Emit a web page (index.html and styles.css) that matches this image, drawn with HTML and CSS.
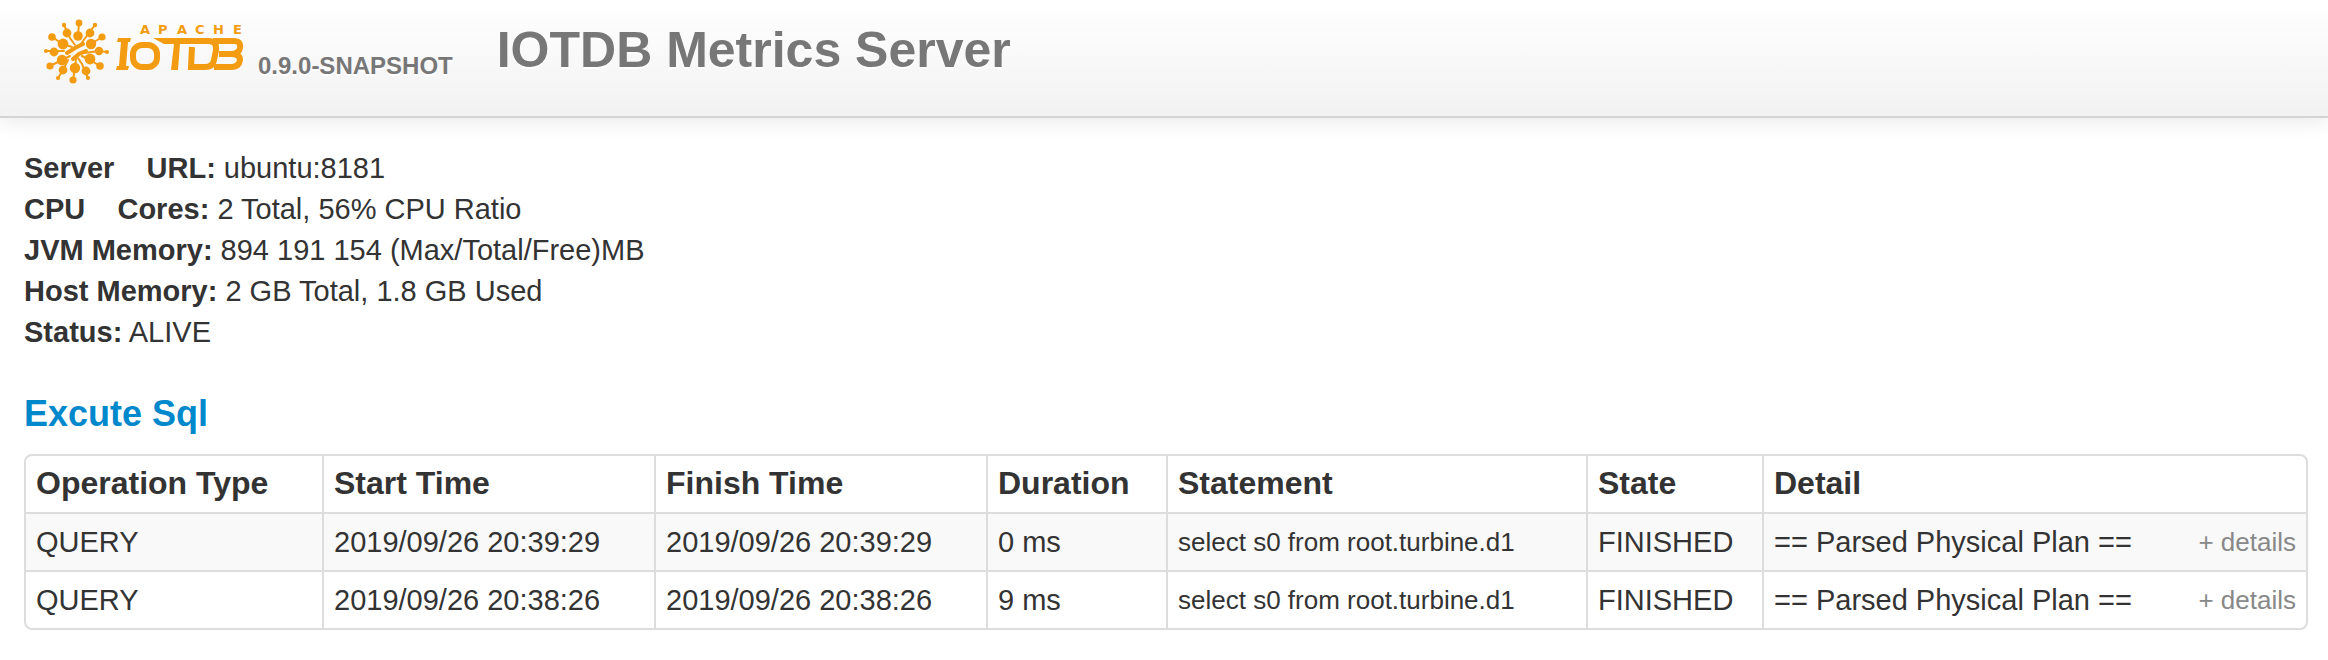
FILE: index.html
```html
<!DOCTYPE html>
<html lang="en">
<head>
<meta charset="utf-8">
<title>IOTDB Metrics Server</title>
<link rel="stylesheet" href="styles.css">
</head>
<body>
<header class="navbar">
  <a class="brand" href="#" aria-label="Apache IoTDB">
    <svg class="logo" width="206" height="70" viewBox="40 14 206 70">
      <g fill="none" stroke="#f39c12" stroke-linecap="round">
        <path stroke-width="2" d="M79 23L78 36M64 25L70 38L75 45M95 25L86 37L80 45M52 37L63 44L72 47M102 37L91 44M46 51H54L64 51M107 52L99 51L84 53M50 66L62 60L70 56M100 66L90 60L82 56M58 78L63 70L68 60M88 78L82 64L78 58M73 80L75 68L76 59"/>
        <path stroke-width="4" d="M67 53L75 48L83 44M73 59L79 54L86 51"/>
      </g>
      <g fill="#f39c12">
        <circle cx="79" cy="23" r="3.4"/><circle cx="64" cy="25" r="2.2"/><circle cx="95" cy="25" r="2.2"/>
        <circle cx="67" cy="33" r="4.4"/><circle cx="90" cy="33" r="4.4"/><circle cx="78" cy="36" r="4.8"/>
        <circle cx="52" cy="37" r="3.8"/><circle cx="102" cy="37" r="3.6"/><circle cx="63" cy="44" r="5.4"/><circle cx="91" cy="44" r="5.2"/>
        <circle cx="46" cy="51" r="2"/><circle cx="54" cy="52" r="4.4"/><circle cx="99" cy="51" r="4.2"/><circle cx="107" cy="52" r="2"/>
        <circle cx="62" cy="60" r="5.2"/><circle cx="90" cy="59" r="5.4"/><circle cx="50" cy="66" r="3.6"/><circle cx="100" cy="66" r="3.8"/>
        <circle cx="63" cy="70" r="4.4"/><circle cx="75" cy="68" r="5.2"/><circle cx="86" cy="71" r="4.4"/>
        <circle cx="58" cy="78" r="2.1"/><circle cx="88" cy="78" r="2.1"/><circle cx="73" cy="80" r="3.6"/>
      </g>
      <text class="logo-caption" x="140 158 177 195 213 233" y="34">APACHE</text>
      <path fill="#f39c12" d="M118 38H131L130 42H128L126 66H129L128 70H116L117 66H119L121 42H117ZM153 38H210L216 44H180L178 70H171L174 44H164Z"/>
      <g fill="none" stroke="#f39c12" stroke-width="6">
        <rect x="133" y="45" width="24" height="22" rx="9"/>
        <path d="M192 47L191 67H205Q213 67 214 60L216 50Q217 42 209 41"/>
        <path d="M213 41H234Q241 41 240 48Q239 54 231 54H219M231 54Q240 54 240 60Q239 67 231 67H214"/>
      </g>
    </svg>
  </a>
  <span class="version">0.9.0-SNAPSHOT</span>
  <h1 class="title">IOTDB Metrics Server</h1>
</header>
<main class="content">
  <ul class="summary">
    <li><strong>Server&nbsp;&nbsp;&nbsp; URL:</strong> ubuntu:8181</li>
    <li><strong>CPU&nbsp;&nbsp;&nbsp; Cores:</strong> 2 Total, 56% CPU Ratio</li>
    <li><strong>JVM Memory:</strong> 894 191 154 (Max/Total/Free)MB</li>
    <li><strong>Host Memory:</strong> 2 GB Total, 1.8 GB Used</li>
    <li><strong>Status:</strong> ALIVE</li>
  </ul>
  <h2 class="section-title"><a href="#sql">Excute Sql</a></h2>
  <table class="sql-table" id="sql">
    <colgroup>
      <col class="col-type"><col class="col-time"><col class="col-time"><col class="col-duration"><col class="col-statement"><col class="col-state"><col>
    </colgroup>
    <thead>
      <tr><th>Operation Type</th><th>Start Time</th><th>Finish Time</th><th>Duration</th><th>Statement</th><th>State</th><th>Detail</th></tr>
    </thead>
    <tbody>
      <tr><td>QUERY</td><td>2019/09/26 20:39:29</td><td>2019/09/26 20:39:29</td><td>0 ms</td><td class="statement">select s0 from root.turbine.d1</td><td>FINISHED</td><td><div class="detail"><span>== Parsed Physical Plan ==</span><button class="expand" type="button">+ details</button></div></td></tr>
      <tr><td>QUERY</td><td>2019/09/26 20:38:26</td><td>2019/09/26 20:38:26</td><td>9 ms</td><td class="statement">select s0 from root.turbine.d1</td><td>FINISHED</td><td><div class="detail"><span>== Parsed Physical Plan ==</span><button class="expand" type="button">+ details</button></div></td></tr>
    </tbody>
  </table>
</main>
</body>
</html>
```
FILE: styles.css
```css
* { box-sizing: border-box; }

body {
  margin: 0;
  background: #fff;
  color: #333;
  font: 29px/41px "Liberation Sans", Arial, sans-serif;
}

.navbar {
  display: flex;
  align-items: flex-start;
  padding: 14px 40px 30px;
  border-bottom: 2px solid #d4d4d4;
  background: linear-gradient(#fff, #f2f2f2);
  box-shadow: 0 2px 20px rgba(0, 0, 0, 0.1);
  color: #777;
  font-weight: bold;
  text-shadow: 0 2px 0 #fff;
}

.logo { display: block; }

.logo-caption {
  fill: #f39c12;
  font: bold 13px "DejaVu Sans", sans-serif;
  text-shadow: none;
}

.version {
  padding-top: 31px;
  margin-left: 12px;
  font-size: 24px;
}

.title {
  margin: 0 0 0 44px;
  font-size: 50px;
  line-height: 72px;
}

.content { padding: 30px 20px 20px 24px; }

.summary {
  margin: 0;
  padding: 0;
  list-style: none;
}

.section-title {
  margin: 40px 0 20px;
  font-size: 36px;
  line-height: 41px;
}

.section-title a {
  color: #08c;
  text-decoration: none;
}

.sql-table {
  width: 100%;
  border: 2px solid #ddd;
  border-radius: 8px;
  border-spacing: 0;
  table-layout: fixed;
  line-height: 40px;
}

.sql-table th,
.sql-table td {
  padding: 8px 10px;
  text-align: left;
  white-space: nowrap;
}

.sql-table th {
  padding-top: 7px;
  padding-bottom: 9px;
  font-size: 32px;
}

.sql-table td { border-top: 2px solid #ddd; }

.sql-table th + th,
.sql-table td + td { border-left: 2px solid #ddd; }

.sql-table tbody tr:nth-child(odd) { background: #f9f9f9; }

.col-type { width: 296px; }
.col-time { width: 332px; }
.col-duration { width: 180px; }
.col-statement { width: 420px; }
.col-state { width: 176px; }

.sql-table .statement { font-size: 26px; }

.detail {
  display: flex;
  justify-content: space-between;
  align-items: center;
}

.expand {
  padding: 0;
  border: 0;
  background: none;
  color: #888;
  font: inherit;
  font-size: 26px;
  cursor: pointer;
}
```
